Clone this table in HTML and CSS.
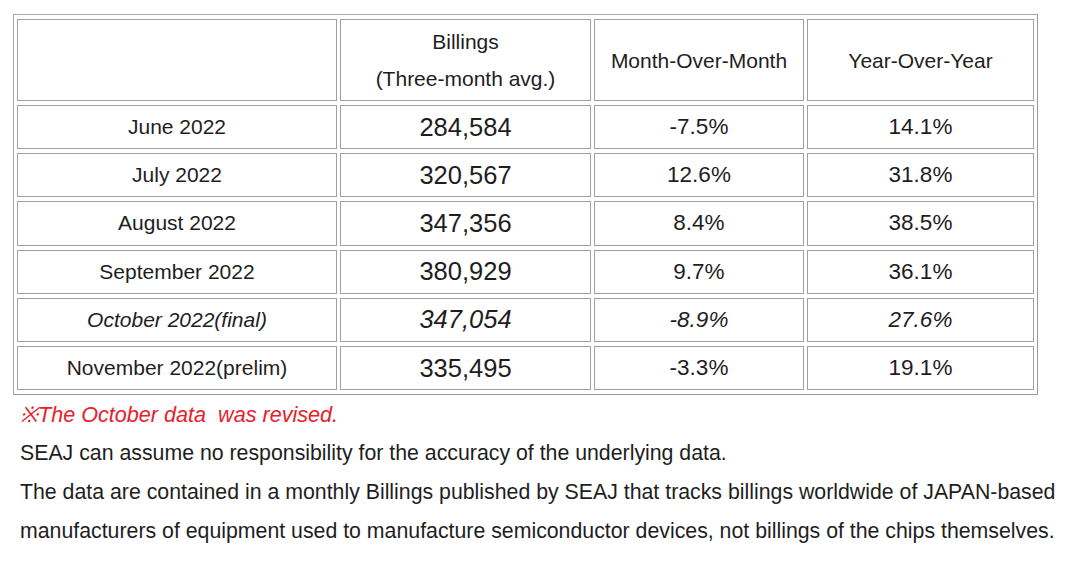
FILE: index.html
```html
<!DOCTYPE html>
<html>
<head>
<meta charset="utf-8">
<link rel="stylesheet" href="styles.css">
</head>
<body>
<div class="page">
  <table class="data">
    <colgroup>
      <col class="c1"><col class="c2"><col class="c3"><col class="c4">
    </colgroup>
    <tr class="head">
      <td></td>
      <td class="billhead">Billings<br>(Three-month avg.)</td>
      <td>Month-Over-Month</td>
      <td>Year-Over-Year</td>
    </tr>
    <tr><td class="lbl">June 2022</td><td class="num">284,584</td><td class="pct">-7.5%</td><td class="pct">14.1%</td></tr>
    <tr><td class="lbl">July 2022</td><td class="num">320,567</td><td class="pct">12.6%</td><td class="pct">31.8%</td></tr>
    <tr><td class="lbl">August 2022</td><td class="num">347,356</td><td class="pct">8.4%</td><td class="pct">38.5%</td></tr>
    <tr><td class="lbl">September 2022</td><td class="num">380,929</td><td class="pct">9.7%</td><td class="pct">36.1%</td></tr>
    <tr class="ital"><td class="lbl">October 2022(final)</td><td class="num">347,054</td><td class="pct">-8.9%</td><td class="pct">27.6%</td></tr>
    <tr><td class="lbl">November 2022(prelim)</td><td class="num">335,495</td><td class="pct">-3.3%</td><td class="pct">19.1%</td></tr>
  </table>
  <div class="notes">
    <p class="red">※The October data&nbsp; was revised.</p>
    <p>SEAJ can assume no responsibility for the accuracy of the underlying data.</p>
    <p>The data are contained in a monthly Billings published by SEAJ that tracks billings worldwide of JAPAN-based manufacturers of equipment used to manufacture semiconductor devices, not billings of the chips themselves.</p>
  </div>
</div>
</body>
</html>
```

FILE: styles.css
```css
html, body {
  margin: 0;
  padding: 0;
  background: #ffffff;
}
.page {
  padding: 14px 0 0 13px;
  font-family: "Liberation Sans", Arial, sans-serif;
  color: #1e1e1e;
}
.data {
  border: 1px solid #a8a8a8;
  border-bottom-color: #999;
  border-right-color: #999;
  border-spacing: 3px 4px;
  width: 1025px;
  table-layout: fixed;
}
.c1 { width: 320px; }
.c2 { width: 251px; }
.c3 { width: 210px; }
.c4 { width: 227px; }
.data td {
  border: 1px solid #a0a0a0;
  text-align: center;
  padding: 0;
  font-size: 21px;
  height: 42.2px;
}
.head td {
  height: 80px;
  line-height: 37px;
}
.data td.num {
  font-size: 25.5px;
}
.data td.pct {
  font-size: 22.5px;
}
.ital td {
  font-style: italic;
}
.notes {
  padding-left: 7px;
  font-size: 21.3px;
  line-height: 39px;
  margin-top: 0;
  width: 1055px;
}
.notes p {
  margin: 0;
}
.red {
  color: #e8202a;
  font-style: italic;
  font-size: 21.6px;
}
```
